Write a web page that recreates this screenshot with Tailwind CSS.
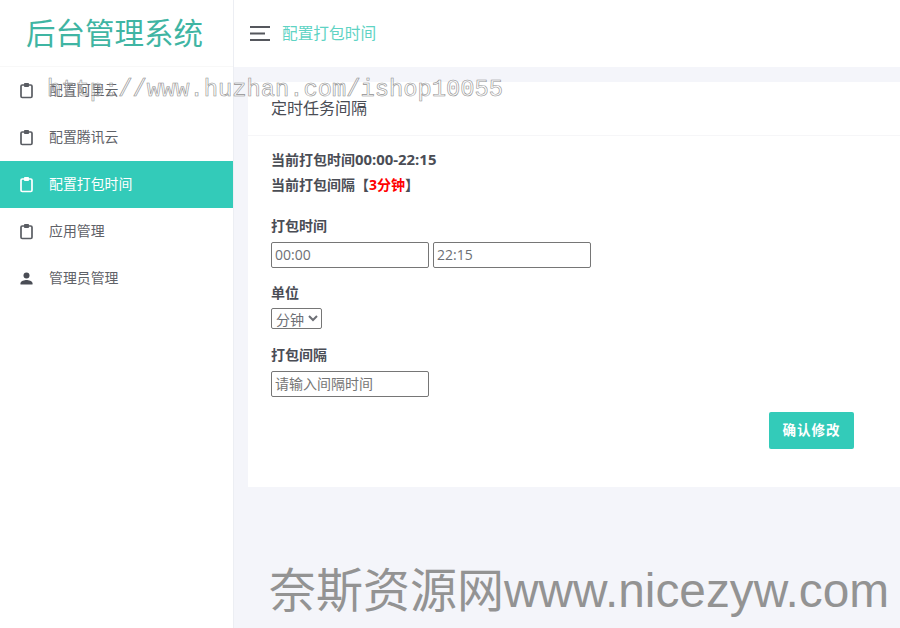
<!DOCTYPE html>
<html lang="en">

<head>
    <meta charset="UTF-8">
    <meta name="viewport" content="width=device-width, initial-scale=1.0">
    <script src="https://cdn.jsdelivr.net/npm/@tailwindcss/browser@4"></script>
    <title>后台管理系统</title>
</head>

<body class="relative h-[628px] w-[900px] overflow-hidden bg-[#f4f5fa] font-['Open_Sans','Noto_Sans_CJK_SC',sans-serif] text-sm text-[#4a4d55]">
    <div class="flex h-full">
        <!-- sidebar -->
        <aside class="h-full w-[234px] shrink-0 border-r border-[#eceef3] bg-white">
            <div class="flex h-[67px] items-center justify-center border-b border-[#f8f8f8] pr-[4px]">
                <h1 class="text-[29.5px] font-normal text-[#3fb5a3]">后台管理系统</h1>
            </div>
            <nav class="text-[13.9px] text-[#5f6268]">
                <a class="flex h-[47px] items-center gap-[14px] pl-[18px]">
                    <svg class="size-[17px] text-[#5a5d63]" viewBox="0 0 17 17" fill="none" stroke="currentColor" stroke-width="1.7"><path d="M6 3H4.200Q3 3 3 4.200v10.100q0 1.200 1.200 1.200h8.600q1.200 0 1.200-1.200V4.200Q14 3 12.800 3H11"/><path d="M6.500 1.500h4v3h-4z" fill="currentColor" stroke-width="1"/></svg>
                    <span class="pb-[2px]">配置阿里云</span>
                </a>
                <a class="flex h-[47px] items-center gap-[14px] pl-[18px]">
                    <svg class="size-[17px] text-[#5a5d63]" viewBox="0 0 17 17" fill="none" stroke="currentColor" stroke-width="1.7"><path d="M6 3H4.200Q3 3 3 4.200v10.100q0 1.200 1.200 1.200h8.600q1.200 0 1.200-1.200V4.200Q14 3 12.800 3H11"/><path d="M6.500 1.500h4v3h-4z" fill="currentColor" stroke-width="1"/></svg>
                    <span class="pb-[2px]">配置腾讯云</span>
                </a>
                <a class="flex h-[47px] items-center gap-[14px] bg-[#33cbb9] pl-[18px] text-white">
                    <svg class="size-[17px]" viewBox="0 0 17 17" fill="none" stroke="currentColor" stroke-width="1.7"><path d="M6 3H4.200Q3 3 3 4.200v10.100q0 1.200 1.200 1.200h8.600q1.200 0 1.200-1.200V4.200Q14 3 12.800 3H11"/><path d="M6.500 1.500h4v3h-4z" fill="currentColor" stroke-width="1"/></svg>
                    <span class="pb-[2px]">配置打包时间</span>
                </a>
                <a class="flex h-[47px] items-center gap-[14px] pl-[18px]">
                    <svg class="size-[17px] text-[#5a5d63]" viewBox="0 0 17 17" fill="none" stroke="currentColor" stroke-width="1.7"><path d="M6 3H4.200Q3 3 3 4.200v10.100q0 1.200 1.200 1.200h8.600q1.200 0 1.200-1.200V4.200Q14 3 12.800 3H11"/><path d="M6.500 1.500h4v3h-4z" fill="currentColor" stroke-width="1"/></svg>
                    <span class="pb-[2px]">应用管理</span>
                </a>
                <a class="flex h-[47px] items-center gap-[14px] pl-[18px]">
                    <svg class="size-[17px] text-[#4a4d55]" viewBox="0 0 17 17" fill="currentColor"><circle cx="8.500" cy="5.500" r="3"/><path d="M2.500 14.500v-1.300c0-2 4-3.200 6-3.200s6 1.200 6 3.200v1.300z"/></svg>
                    <span class="pb-[2px]">管理员管理</span>
                </a>
            </nav>
        </aside>

        <div class="min-w-0 flex-1">
            <!-- top bar -->
            <header class="flex h-[67px] items-center gap-[12px] bg-white pl-[16px]">
                <svg class="h-[16px] w-[20px] text-[#55575d]" viewBox="0 0 20 16" fill="none" stroke="currentColor" stroke-width="2"><path d="M0 1h20M0 7.500h15M0 14h20"/></svg>
                <span class="text-[15.7px] text-[#5fd3c4]">配置打包时间</span>
            </header>

            <!-- card -->
            <main class="pt-[15px] pl-[14px]">
                <section class="h-[405px] bg-white">
                    <div class="flex h-[54px] items-center border-b border-[#f6f6f8] pb-[1px] pl-[23px] text-[16px] text-[#4a4d55]">定时任务间隔</div>
                    <div class="pl-[23px]">
                        <p class="mt-[13px] h-[21px] leading-[21px] font-bold">当前打包时间<span class="text-[14.9px]">00:00-22:15</span></p>
                        <p class="mt-[4px] h-[21px] leading-[21px] font-bold">当前打包间隔【<span class="text-[#ff0000]">3分钟</span>】</p>

                        <label class="mt-[20px] block h-[21px] leading-[21px] font-bold">打包时间</label>
                        <div class="mt-[6px] flex gap-[4px]">
                            <input type="text" value="00:00" class="h-[26px] w-[158px] rounded-[2px] border border-[#767676] px-[3px] pb-[2px] text-[14px] text-[#6d6f75]">
                            <input type="text" value="22:15" class="h-[26px] w-[158px] rounded-[2px] border border-[#767676] px-[3px] pb-[2px] text-[14px] text-[#6d6f75]">
                        </div>

                        <label class="mt-[14px] block h-[21px] leading-[21px] font-bold">单位</label>
                        <select class="mt-[5px] block h-[21px] w-[51px] rounded-[2px] border border-[#767676] bg-white text-[14px] text-[#6d6f75]">
                            <option>分钟</option>
                        </select>

                        <label class="mt-[15px] block h-[21px] leading-[21px] font-bold">打包间隔</label>
                        <input type="text" placeholder="请输入间隔时间" class="mt-[6px] block h-[26px] w-[158px] rounded-[2px] border border-[#767676] px-[3px] pb-[2px] text-[14px] placeholder:text-[#757575]">
                    </div>
                    <div class="mt-[15px] flex justify-end pr-[46px]">
                        <button class="h-[37px] w-[85px] rounded-[2px] bg-[#33cbb9] text-[13.500px] font-bold tracking-[1px] text-white">确认修改</button>
                    </div>
                </section>
            </main>
        </div>
    </div>

    <!-- watermarks -->
    <div class="absolute top-[73px] left-[47px] font-['Liberation_Mono',monospace] text-[23.75px] leading-[34px] whitespace-nowrap text-white/40 opacity-95 [-webkit-text-stroke:0.6px_#8c8c8c]">http://www.huzhan.com/ishop10055</div>
    <div class="absolute top-[560px] left-[269px] font-['Liberation_Sans','Noto_Sans_CJK_SC',sans-serif] text-[47px] leading-[62px] whitespace-nowrap text-[#939393]">奈斯资源网<span class="text-[47.8px]">www.nicezyw.com</span></div>
</body>

</html>
